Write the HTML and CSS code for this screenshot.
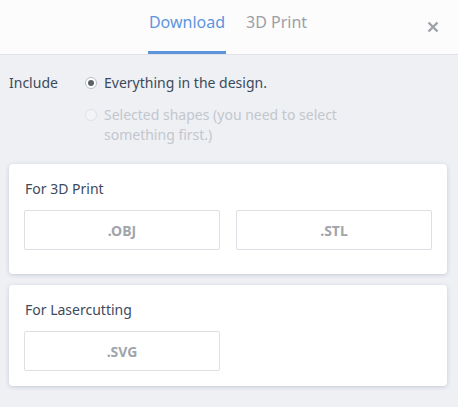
FILE: index.html
```html
<!DOCTYPE html>
<html>
<head>
<meta charset="utf-8">
<link rel="stylesheet" href="styles.css">
</head>
<body>
<div class="dialog">
  <header class="header">
    <nav class="tabs">
      <span class="tab active">Download</span>
      <span class="tab">3D Print</span>
    </nav>
    <span class="close" aria-label="Close">
      <svg width="12" height="12" viewBox="0 0 12 12"><path d="M1.5 1.5L10.5 10.5M10.5 1.5L1.5 10.5" stroke="#9ea2a8" stroke-width="2.4" stroke-linecap="butt"/></svg>
    </span>
  </header>
  <section class="include">
    <div class="label">Include</div>
    <div class="options">
      <label class="option"><span class="radio checked"></span><span>Everything in the design.</span></label>
      <label class="option disabled"><span class="radio"></span><span>Selected shapes (you need to select something first.)</span></label>
    </div>
  </section>
  <section class="card card-print">
    <h3 class="card-title">For 3D Print</h3>
    <div class="buttons">
      <button class="fmt">.OBJ</button>
      <button class="fmt">.STL</button>
    </div>
  </section>
  <section class="card card-laser">
    <h3 class="card-title">For Lasercutting</h3>
    <div class="buttons">
      <button class="fmt">.SVG</button>
    </div>
  </section>
</div>
</body>
</html>
```
FILE: styles.css
```css
* { box-sizing: border-box; }
html, body { margin: 0; padding: 0; }
body {
  width: 458px;
  height: 407px;
  background: #eef0f4;
  font-family: "Noto Sans", "Open Sans", sans-serif;
  color: #3c4a5c;
  overflow: hidden;
}
.header {
  height: 55px;
  background: #fcfcfd;
  border-bottom: 1px solid #dfe2e8;
  display: flex;
  justify-content: center;
  position: relative;
}
.tabs {
  display: flex;
  gap: 20px;
  height: 54px;
  margin-left: -3px;
}
.tab {
  font-size: 16px;
  color: #9ba0a6;
  padding-top: 11px;
  height: 54px;
  border-bottom: 3px solid transparent;
}
.tab.active {
  color: #5d95dc;
  border-bottom-color: #5d95dc;
  padding-left: 1px;
  padding-right: 1px;
}
.close {
  position: absolute;
  right: 19px;
  top: 21px;
  width: 12px;
  height: 12px;
  display: block;
}
.close svg { display: block; }
.include {
  display: flex;
  padding: 18px 0 0 9px;
  font-size: 14px;
}
.label {
  width: 76px;
  line-height: 20px;
}
.options {
  display: flex;
  flex-direction: column;
  gap: 12px;
}
.option {
  display: flex;
  align-items: flex-start;
  line-height: 20px;
  width: 300px;
}
.option.disabled { color: #c3c7cd; }
.radio {
  flex: none;
  width: 12px;
  height: 12px;
  border-radius: 50%;
  border: 1px solid #b9bdc4;
  background: #fff;
  margin: 4px 7px 0 0;
  position: relative;
}
.radio.checked::after {
  content: "";
  position: absolute;
  left: 2px; top: 2px;
  width: 6px; height: 6px;
  border-radius: 50%;
  background: #5c6168;
}
.option.disabled .radio {
  border-color: #dfe2e6;
  background: #f3f4f7;
}
.card {
  margin: 0 11px 0 9px;
  background: #fff;
  border-radius: 4px;
  box-shadow: 0 1px 4px rgba(60, 75, 100, 0.22);
  padding: 15px 15px 24px 15px;
}
.card-print { margin-top: 19px; }
.card-laser { margin-top: 11px; padding-bottom: 15px; }
.card-title {
  margin: 0 0 11px 1px;
  font-size: 14px;
  font-weight: 400;
  line-height: 20px;
  color: #3c4a5c;
}
.buttons {
  display: flex;
  gap: 16px;
}
.fmt {
  width: 196px;
  height: 40px;
  background: #fff;
  border: 1px solid #dcdfe4;
  border-radius: 2px;
  font-family: inherit;
  font-size: 14px;
  font-weight: 700;
  color: #a0a5ab;
  padding: 0;
}
```
